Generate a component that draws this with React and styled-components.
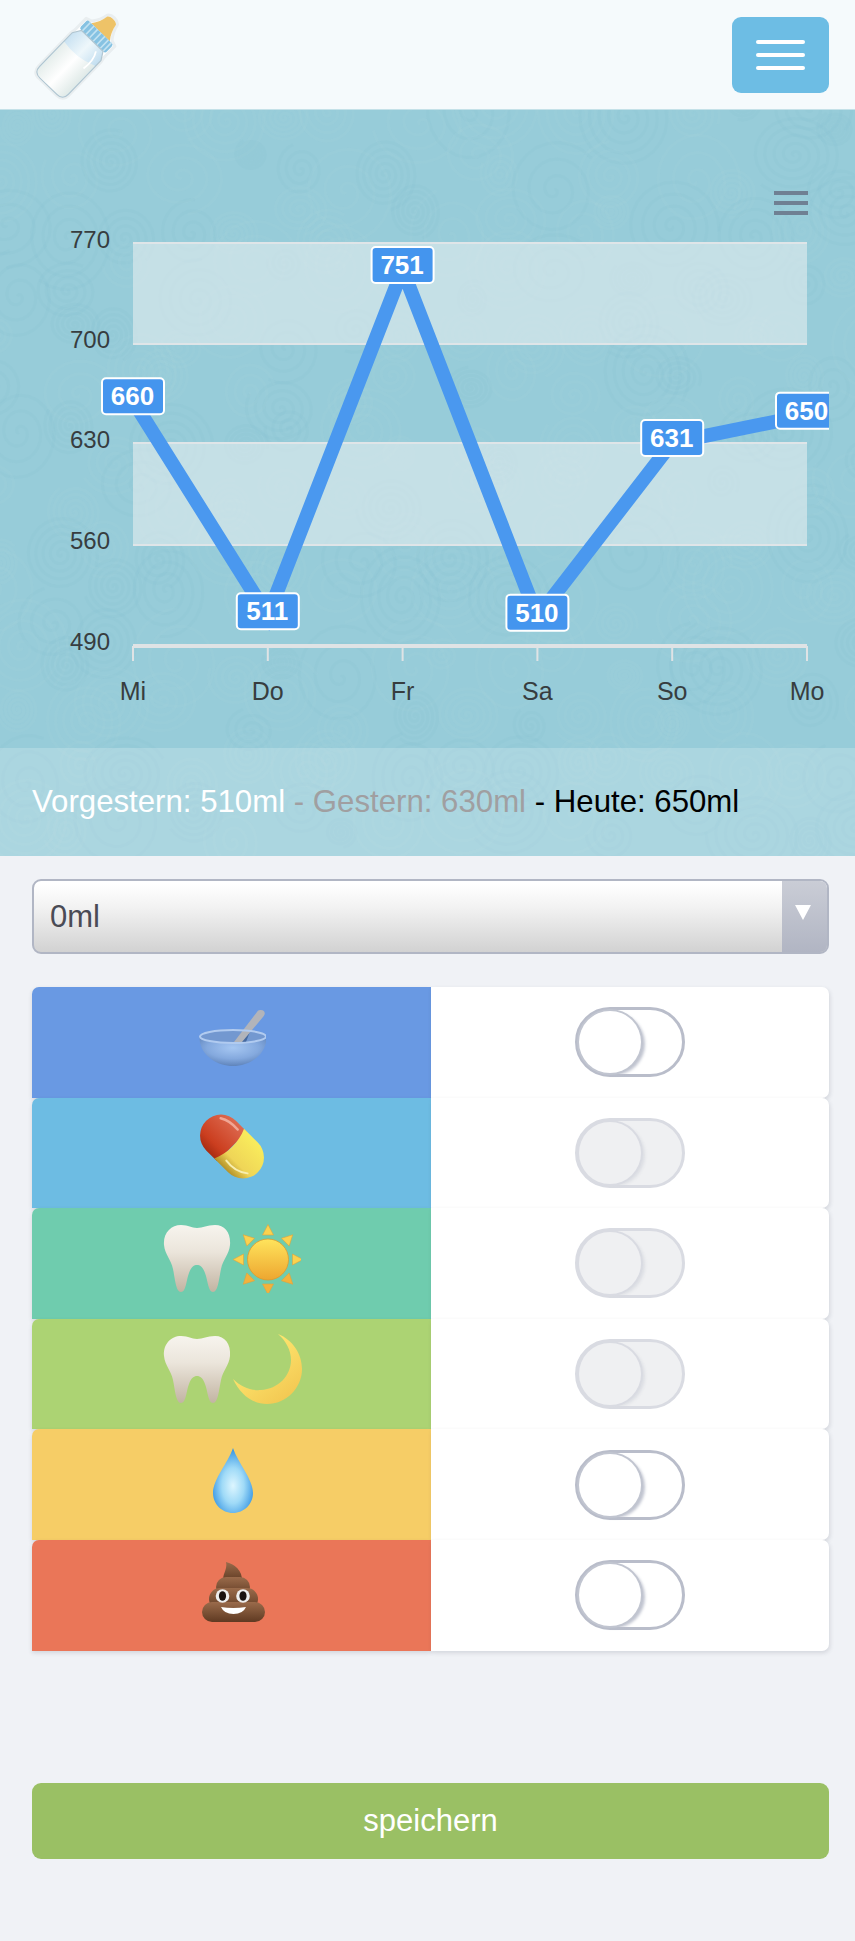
import React from "react";
import styled, { createGlobalStyle } from "styled-components";

const GlobalStyle = createGlobalStyle`
  html, body {
    margin: 0;
    background: #f0f2f6;
    font-family: "Liberation Sans", Arial, sans-serif;
  }
`;

const Page = styled.div`
  width: 855px;
  min-height: 1941px;
  background: #f0f2f6;
`;

const Header = styled.header`
  box-sizing: border-box;
  height: 110px;
  display: flex;
  align-items: center;
  justify-content: space-between;
  padding: 0 26px 0 33px;
  background: #f5fafc;
  border-bottom: 1px solid #c4e1e8;
`;

const MenuButton = styled.button`
  width: 97px;
  height: 76px;
  display: flex;
  flex-direction: column;
  align-items: center;
  justify-content: center;
  gap: 9px;
  padding: 0;
  border: 0;
  border-radius: 9px;
  background: #6dbde4;
`;

const MenuBar = styled.span`
  width: 49px;
  height: 4px;
  border-radius: 2px;
  background: #fff;
`;

const ChartSection = styled.section`
  position: relative;
  overflow: hidden;
  height: 746px;
  background: #97ccd9;
`;

const PatternLayer = styled.svg`
  position: absolute;
  inset: 0;
  display: block;
`;

const ChartFrame = styled.div`
  position: relative;
  width: 829px;
  height: 637.5px;
  overflow: hidden;
`;

const ChartToolbar = styled.div`
  position: absolute;
  top: 81px;
  right: 21px;
  display: flex;
  flex-direction: column;
  gap: 6px;
`;

const ToolbarBar = styled.span`
  width: 34px;
  height: 4px;
  background: #6f8093;
`;

const StatusBand = styled.div`
  position: relative;
  box-sizing: border-box;
  height: 108.5px;
  display: flex;
  align-items: center;
  padding: 1px 0 0 32px;
  background: rgba(255, 255, 255, 0.2);
  font-size: 31.2px;
  white-space: pre;
`;

const StatusPart = styled.span`
  color: ${(p) => p.$color};
`;

const Main = styled.main`
  display: flex;
  flex-direction: column;
  padding: 23px 26px 0 32px;
`;

const SelectBox = styled.div`
  box-sizing: border-box;
  height: 75px;
  display: flex;
  overflow: hidden;
  border: 2px solid #b1b6c4;
  border-radius: 9px;
  background: linear-gradient(#fff 4%, #f3f3f3 35%, #d2d2d2 100%);
`;

const SelectValue = styled.div`
  flex: 1;
  display: flex;
  align-items: center;
  padding-left: 16px;
  font-size: 31px;
  color: #4a4b55;
`;

const SelectArrow = styled.div`
  width: 45px;
  display: flex;
  justify-content: center;
  padding: 24px 4px 0 0;
  box-sizing: border-box;
  background: linear-gradient(#cacdd6, #b1b5c3);

  &::after {
    content: "";
    width: 0;
    height: 0;
    border-left: 8px solid transparent;
    border-right: 8px solid transparent;
    border-top: 15px solid #fff;
  }
`;

const RowList = styled.div`
  display: flex;
  flex-direction: column;
  margin-top: 33px;
`;

const Row = styled.div`
  height: 110.6px;
  display: grid;
  grid-template-columns: 1fr 1fr;
`;

const IconCell = styled.div`
  box-sizing: border-box;
  display: flex;
  align-items: center;
  justify-content: center;
  padding-bottom: 10px;
  border-radius: 7px 0 0 0;
  background: ${(p) => p.$color};
  box-shadow: 0 2px 4px rgba(60, 70, 90, 0.16);
`;

const SwitchCell = styled.div`
  display: flex;
  align-items: center;
  justify-content: center;
  border-radius: 0 7px 7px 0;
  background: #fff;
  box-shadow: 1px 2px 4px rgba(60, 70, 90, 0.16);
`;

const Track = styled.div`
  box-sizing: border-box;
  width: 110px;
  height: 70px;
  display: flex;
  align-items: center;
  padding-left: 1px;
  border: 3px solid ${(p) => (p.$disabled ? "#d9dbe2" : "#b9bdca")};
  border-radius: 35px;
  background: ${(p) => (p.$disabled ? "#eff0f2" : "#fff")};
`;

const Knob = styled.div`
  width: 62px;
  height: 62px;
  border-radius: 50%;
  background: ${(p) => (p.$disabled ? "#eff0f2" : "#fff")};
  box-shadow: 0 0 0 2px ${(p) => (p.$disabled ? "#d9dbe2" : "#c1c5d0")},
    4px 2px 3px ${(p) => (p.$disabled ? "rgba(215,217,224,0.8)" : "rgba(185,190,203,0.9)")};
`;

const SaveButton = styled.button`
  height: 76px;
  margin-top: 132.7px;
  padding: 0;
  border: 0;
  border-radius: 9px;
  background: #9ac064;
  color: #fff;
  font-family: inherit;
  font-size: 31px;
`;

const EmojiSvg = styled.svg`
  display: block;
  width: 70px;
  height: 70px;
  flex: none;
`;

// werte der woche
const DAYS = [
  { day: "Mi", ml: 660 },
  { day: "Do", ml: 511 },
  { day: "Fr", ml: 751 },
  { day: "Sa", ml: 510 },
  { day: "So", ml: 631 },
  { day: "Mo", ml: 650 },
];

const AXIS_LABELS = [
  { text: "770", y: 247 },
  { text: "700", y: 347 },
  { text: "630", y: 447 },
  { text: "560", y: 548 },
  { text: "490", y: 649 },
];

const xAt = (i) => 133 + i * 134.8;
const yAt = (ml) => 536 - ((ml - 490) / 70) * 101;

const spiralPath = (cx, cy, radius, turns, squash, start) => {
  const steps = turns * 24;
  let d = "";
  for (let i = 0; i <= steps; i++) {
    const t = i / steps;
    const a = start + t * turns * Math.PI * 2;
    const r = radius * t;
    const x = cx + Math.cos(a) * r;
    const y = cy + Math.sin(a) * r * squash;
    d += `${i === 0 ? "M" : "L"}${x.toFixed(1)} ${y.toFixed(1)}`;
  }
  return d;
};

const buildSpirals = () => {
  let seed = 4711;
  const next = () => {
    seed = (seed * 16807) % 2147483647;
    return seed / 2147483647;
  };
  const list = [];
  for (let row = 0; row < 14; row++) {
    for (let col = 0; col < 16; col++) {
      const radius = 16 + next() * 34;
      list.push({
        d: spiralPath(
          col * 56 + next() * 40 - 10,
          row * 54 + next() * 40 - 10,
          radius,
          3 + Math.floor(next() * 3),
          0.85 + next() * 0.35,
          next() * 6
        ),
        light: next() > 0.4,
      });
    }
  }
  return list;
};

const SPIRALS = buildSpirals();

const Pattern = () => (
  <PatternLayer width="855" height="746" viewBox="0 0 855 746">
    {SPIRALS.map((s, i) => (
      <path
        key={i}
        d={s.d}
        fill="none"
        strokeWidth="3"
        stroke={s.light ? "rgba(175,220,230,0.1)" : "rgba(130,190,205,0.1)"}
      />
    ))}
  </PatternLayer>
);

const Chart = () => {
  const points = DAYS.map((d, i) => `${xAt(i)},${yAt(d.ml)}`).join(" ");
  return (
    <svg width="829" height="637.5" viewBox="0 0 829 637.5" style={{ display: "block" }}>
      <rect x="133" y="132" width="674" height="102" fill="rgba(243,243,243,0.5)" />
      <rect x="133" y="333" width="674" height="103" fill="rgba(243,243,243,0.5)" />
      {[133, 234, 333, 435].map((y) => (
        <rect key={y} x="133" y={y - 1} width="674" height="2" fill="#dfe5e8" />
      ))}
      <rect x="133" y="534" width="674" height="4" fill="#dfe3e5" />
      {DAYS.map((d, i) => (
        <rect key={d.day} x={xAt(i) - 1} y="536" width="2" height="15" fill="#dfe3e5" />
      ))}
      {AXIS_LABELS.map((l) => (
        <text
          key={l.text}
          x="110"
          y={l.y - 110 + 0.5}
          textAnchor="end"
          fontFamily="Liberation Sans"
          fontSize="24"
          fill="#373d3f"
        >
          {l.text}
        </text>
      ))}
      {DAYS.map((d, i) => (
        <text
          key={d.day}
          x={xAt(i)}
          y="590"
          textAnchor="middle"
          fontFamily="Liberation Sans"
          fontSize="25"
          fill="#373d3f"
        >
          {d.day}
        </text>
      ))}
      <polyline points={points} fill="none" stroke="#4a98ef" strokeWidth="14" strokeLinejoin="miter" />
      {DAYS.map((d, i) => (
        <g key={d.day}>
          <rect
            x={xAt(i) - 31}
            y={yAt(d.ml) - 22.5}
            width="62"
            height="36"
            rx="4"
            fill="#4495ee"
            stroke="#fff"
            strokeWidth="2"
          />
          <text
            x={xAt(i) - 0.5}
            y={yAt(d.ml) + 4.5}
            textAnchor="middle"
            fontFamily="Liberation Sans"
            fontSize="26"
            fontWeight="700"
            fill="#fff"
          >
            {d.ml}
          </text>
        </g>
      ))}
    </svg>
  );
};

const Bottle = () => (
  <svg width="92" height="92" viewBox="0 0 92 92" style={{ display: "block" }}>
    <defs>
      <linearGradient id="milk" x1="0" y1="0" x2="1" y2="0">
        <stop offset="0" stopColor="#e6eeec" />
        <stop offset="0.5" stopColor="#ffffff" />
        <stop offset="1" stopColor="#e0eae8" />
      </linearGradient>
      <linearGradient id="glass" x1="0" y1="0" x2="1" y2="0">
        <stop offset="0" stopColor="#c9e2f2" />
        <stop offset="0.5" stopColor="#eef7fb" />
        <stop offset="1" stopColor="#c2def0" />
      </linearGradient>
    </defs>
    <g transform="translate(46 45.5) rotate(44)">
      <path
        d="M-7 -48 C-4 -52 4 -52 7 -48 C8 -42 10 -38 14 -33 L20 -31 L20 -19 L20 -15 L21 -10 L21 36 Q21 45 12 45 L-12 45 Q-21 45 -21 36 L-21 -10 L-20 -15 L-20 -31 L-14 -33 C-10 -38 -8 -42 -7 -48Z"
        fill="#fff"
        stroke="#e9eef0"
        strokeWidth="3"
        strokeLinejoin="round"
      />
      <path d="M-6 -47 C-4 -50 4 -50 6 -47 C7 -41 9 -36 13 -31 L-13 -31 C-9 -36 -7 -41 -6 -47Z" fill="#eec368" />
      <rect x="-18" y="-31" width="36" height="12" rx="2.5" fill="#86c2e2" />
      <path d="M-14 -31v12M-9 -31v12M-4 -31v12M1 -31v12M6 -31v12M11 -31v12M15 -31v12" stroke="#c2e2f2" strokeWidth="1.6" />
      <path
        d="M-15 -19 L15 -19 L20 -11 L20 36 Q20 44 12 44 L-12 44 Q-20 44 -20 36 L-20 -11Z"
        fill="url(#glass)"
        stroke="#b1c6d1"
        strokeWidth="1.2"
      />
      <path d="M-19.4 1 Q0 5 19.4 -3 L19.4 36 Q19.4 43.4 12 43.4 L-12 43.4 Q-19.4 43.4 -19.4 36Z" fill="url(#milk)" />
      <path d="M10 -14 Q15 -6 13 7" fill="none" stroke="#fff" strokeWidth="1.8" />
    </g>
  </svg>
);

const BowlIcon = () => (
  <EmojiSvg viewBox="0 0 70 70">
    <defs>
      <radialGradient id="bowlBody" cx="0.5" cy="0.35" r="0.65">
        <stop offset="0" stopColor="#a6c7f2" />
        <stop offset="0.6" stopColor="#84a9de" />
        <stop offset="1" stopColor="#5f84bb" />
      </radialGradient>
    </defs>
    <ellipse cx="37" cy="34" rx="33" ry="7" fill="#7398d0" />
    <path d="M52 26 L45 40 L50 40 L55 27Z" fill="#45699f" />
    <path d="M65 8 C69 8 70 12 67 15 L46 40 L38 40 L61 10 C62 8 64 8 65 8Z" fill="#b2b4ba" />
    <path d="M3.5 36 C12 42 62 42 70.5 36 C70 54 52 64 37 64 C22 64 4 54 3.5 36Z" fill="url(#bowlBody)" />
    <ellipse cx="37" cy="34.5" rx="33" ry="6.5" fill="none" stroke="#b1cbf0" strokeWidth="2" />
  </EmojiSvg>
);

const PillIcon = () => (
  <EmojiSvg viewBox="0 0 70 70">
    <defs>
      <linearGradient id="pillRed" x1="0" y1="0" x2="0" y2="1">
        <stop offset="0" stopColor="#dd6a50" />
        <stop offset="0.75" stopColor="#cb3e1f" />
        <stop offset="1" stopColor="#a92c12" />
      </linearGradient>
      <linearGradient id="pillYellow" x1="0" y1="0" x2="0" y2="1">
        <stop offset="0" stopColor="#f9ec5c" />
        <stop offset="0.7" stopColor="#efd557" />
        <stop offset="1" stopColor="#b4922a" />
      </linearGradient>
    </defs>
    <g transform="translate(36 33.5) rotate(45)">
      <path d="M0 -21 L-15.5 -21 A21 21 0 0 0 -15.5 21 L0 21Z" fill="url(#pillRed)" />
      <path d="M-4 -21 L15.5 -21 A21 21 0 0 1 15.5 21 L-4 21 C2 8 2 -8 -4 -21Z" fill="url(#pillYellow)" />
      <path d="M-28 -12 Q-20 -17 -8 -16" fill="none" stroke="#f0a695" strokeWidth="2.5" strokeLinecap="round" />
      <path d="M6 14 Q20 16 30 8" fill="none" stroke="#f7eeb0" strokeWidth="2" strokeLinecap="round" />
    </g>
  </EmojiSvg>
);

const ToothIcon = () => (
  <EmojiSvg viewBox="0 0 70 70">
    <defs>
      <linearGradient id="tooth" x1="0" y1="0" x2="0" y2="1">
        <stop offset="0" stopColor="#f7f4ee" />
        <stop offset="0.4" stopColor="#ebe5db" />
        <stop offset="1" stopColor="#c2b4a2" />
      </linearGradient>
    </defs>
    <path
      d="M20 2 C28 2 30 5 36 5 C42 5 46 2 54 2 C64 2 70 10 69 22 C68 32 62 36 60 46 C58 56 57 69 52 69 C47 69 47 58 44 50 C42 44 39 42 36 42 C33 42 30 44 28 50 C25 58 25 69 20 69 C15 69 14 56 12 46 C10 36 4 32 3 22 C2 10 10 2 20 2Z"
      fill="url(#tooth)"
    />
  </EmojiSvg>
);

const SunIcon = () => (
  <EmojiSvg viewBox="0 0 70 70">
    <defs>
      <linearGradient id="sunCore" x1="0" y1="0" x2="0" y2="1">
        <stop offset="0" stopColor="#ffe45c" />
        <stop offset="1" stopColor="#eda630" />
      </linearGradient>
    </defs>
    {[0, 45, 90, 135, 180, 225, 270, 315].map((a) => (
      <path
        key={a}
        d="M37 1.5 L42.5 12 L31.5 12Z"
        transform={`rotate(${a} 37 36.5)`}
        fill={a > 90 && a < 270 ? "#f3b23c" : "#fbd24e"}
        stroke="#e0a33c"
        strokeWidth="0.6"
      />
    ))}
    <circle cx="37" cy="36.5" r="20.5" fill="url(#sunCore)" stroke="#e09a2c" strokeWidth="0.8" />
  </EmojiSvg>
);

const MoonIcon = () => (
  <EmojiSvg viewBox="0 0 70 70" style={{ overflow: "visible" }}>
    <defs>
      <linearGradient id="moon" x1="0.2" y1="0.2" x2="0.8" y2="1">
        <stop offset="0" stopColor="#ffea73" />
        <stop offset="1" stopColor="#f2c650" />
      </linearGradient>
    </defs>
    <path
      d="M47 0 C62 6 71 20 71 35 C71 54 55 70 36 70 C21 70 9 60 2 45 C10 53 20 57 30 56 C47 55 60 42 60 26 C60 16 55 7 47 0Z"
      fill="url(#moon)"
    />
  </EmojiSvg>
);

const DropIcon = () => (
  <EmojiSvg viewBox="0 0 70 70">
    <defs>
      <radialGradient id="drop" cx="0.5" cy="0.58" r="0.55">
        <stop offset="0" stopColor="#ddf6ff" />
        <stop offset="0.5" stopColor="#9fdaf7" />
        <stop offset="1" stopColor="#3a98e4" />
      </radialGradient>
    </defs>
    <path
      d="M37 3 C42 18 57 34 57 48 C57 59 48 68 37 68 C26 68 17 59 17 48 C17 34 32 18 37 3Z"
      fill="url(#drop)"
    />
  </EmojiSvg>
);

const PoopIcon = () => (
  <EmojiSvg viewBox="0 0 70 70">
    <defs>
      <linearGradient id="poop" x1="0" y1="0" x2="0" y2="1">
        <stop offset="0" stopColor="#9a6b4b" />
        <stop offset="1" stopColor="#5f3a22" />
      </linearGradient>
    </defs>
    <path d="M30 7 C38 9 47 15 46 27 L28 27 C25 20 32 15 30 7Z" fill="url(#poop)" />
    <rect x="20" y="22" width="34" height="20" rx="10" fill="url(#poop)" />
    <rect x="13" y="33" width="49" height="22" rx="11" fill="url(#poop)" />
    <rect x="6" y="47" width="63" height="20" rx="10" fill="url(#poop)" />
    <circle cx="26.5" cy="41" r="6.8" fill="#eee" />
    <circle cx="47" cy="41" r="6.8" fill="#eee" />
    <ellipse cx="26.5" cy="41" rx="3.6" ry="4.8" fill="#1a1210" />
    <ellipse cx="47" cy="41" rx="3.6" ry="4.8" fill="#1a1210" />
    <path d="M25 52 Q37 54 50 52 Q47 59 37.5 59 Q28 59 25 52Z" fill="#fff" />
  </EmojiSvg>
);

const ROWS = [
  { id: "food", color: "#6999e3", icons: [BowlIcon], disabled: false },
  { id: "pill", color: "#6dbce3", icons: [PillIcon], disabled: true },
  { id: "morning", color: "#6fccae", icons: [ToothIcon, SunIcon], disabled: true },
  { id: "evening", color: "#acd373", icons: [ToothIcon, MoonIcon], disabled: true },
  { id: "pee", color: "#f6cd66", icons: [DropIcon], disabled: false },
  { id: "poop", color: "#ea7658", icons: [PoopIcon], disabled: false },
];

const App = () => {
  return (
    <Page>
      <GlobalStyle />
      <Header>
        <Bottle />
        <MenuButton aria-label="Menü">
          <MenuBar />
          <MenuBar />
          <MenuBar />
        </MenuButton>
      </Header>
      <ChartSection>
        <Pattern />
        <ChartFrame>
          <Chart />
          <ChartToolbar>
            <ToolbarBar />
            <ToolbarBar />
            <ToolbarBar />
          </ChartToolbar>
        </ChartFrame>
        <StatusBand>
          <StatusPart $color="#fff">Vorgestern: 510ml </StatusPart>
          <StatusPart $color="#a09fa1">- Gestern: 630ml </StatusPart>
          <StatusPart $color="#000">- Heute: 650ml</StatusPart>
        </StatusBand>
      </ChartSection>
      <Main>
        <SelectBox>
          <SelectValue>0ml</SelectValue>
          <SelectArrow />
        </SelectBox>
        <RowList>
          {ROWS.map((row) => (
            <Row key={row.id}>
              <IconCell $color={row.color}>
                {row.icons.map((Icon, i) => (
                  <Icon key={i} />
                ))}
              </IconCell>
              <SwitchCell>
                <Track $disabled={row.disabled}>
                  <Knob $disabled={row.disabled} />
                </Track>
              </SwitchCell>
            </Row>
          ))}
        </RowList>
        <SaveButton>speichern</SaveButton>
      </Main>
    </Page>
  );
};

export default App;
